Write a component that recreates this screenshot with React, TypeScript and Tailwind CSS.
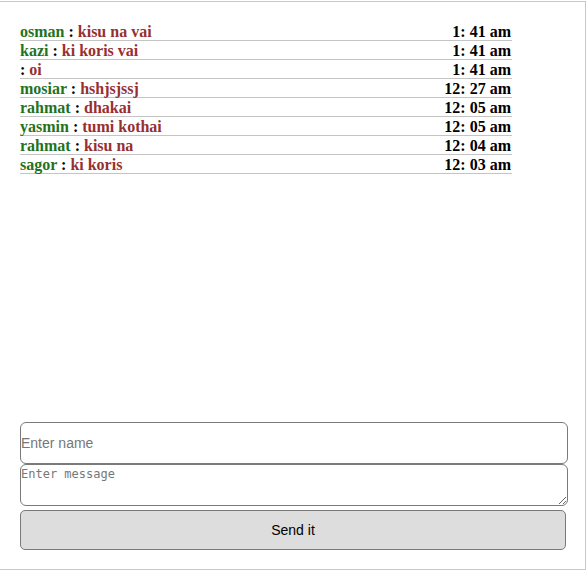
import React from "react";

type Message = {
  name: string;
  text: string;
  time: string;
};

const messages: Message[] = [
  { name: "osman", text: "kisu na vai", time: "1: 41 am" },
  { name: "kazi", text: "ki koris vai", time: "1: 41 am" },
  { name: "", text: "oi", time: "1: 41 am" },
  { name: "mosiar", text: "hshjsjssj", time: "12: 27 am" },
  { name: "rahmat", text: "dhakai", time: "12: 05 am" },
  { name: "yasmin", text: "tumi kothai", time: "12: 05 am" },
  { name: "rahmat", text: "kisu na", time: "12: 04 am" },
  { name: "sagor", text: "ki koris", time: "12: 03 am" },
];

export default function App() {
  return (
    <div className="bg-white pt-px">
      <div className="w-[586px] h-[569px] border border-l-0 border-[#c8c8c8] pl-5 pt-5 flex flex-col">
        <ul className="w-[492px] h-[400px] font-['Liberation_Serif',serif] font-bold text-[16px]">
          {messages.map((m, i) => (
            <li
              key={i}
              className="h-[19px] leading-[16px] border-b border-[#c4c4c4] flex justify-between items-end"
            >
              <span>
                <span className="text-[#1f721f]">{m.name}</span>
                <span className="text-black"> : </span>
                <span className="text-[#963030]">{m.text}</span>
              </span>
              <span className="text-black pr-px">{m.time}</span>
            </li>
          ))}
        </ul>

        <form className="flex flex-col w-[548px]">
          <input
            type="text"
            placeholder="Enter name"
            className="h-[42px] border border-[#7a7a7a] rounded-[6px] px-0 text-[14px] font-['Liberation_Sans',Arial,sans-serif] placeholder:text-[#777] outline-none"
          />
          <textarea
            placeholder="Enter message"
            className="h-[42px] border border-[#7a7a7a] rounded-[6px] px-0 pt-[2px] text-[12px] leading-[14px] font-['DejaVu_Sans_Mono',monospace] placeholder:text-[#777] outline-none"
          />
          <button
            type="button"
            className="mt-[4px] w-[546px] h-[40px] bg-[#dddddd] border border-[#7a7a7a] rounded-[5px] text-[14px] text-black font-['Liberation_Sans',Arial,sans-serif]"
          >
            Send it
          </button>
        </form>
      </div>
    </div>
  );
}
